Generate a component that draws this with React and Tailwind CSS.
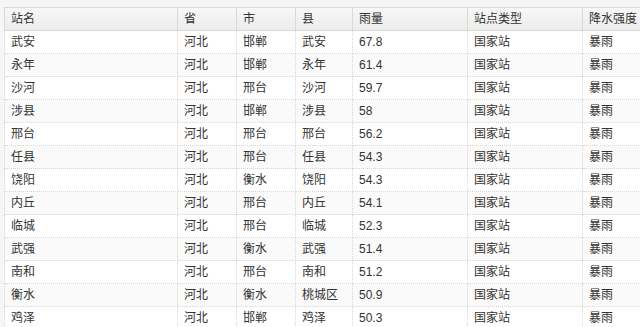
import React from 'react';

const colunas = [
    { titulo: '站名', largura: 'w-[173px]' },
    { titulo: '省', largura: 'w-[59px]' },
    { titulo: '市', largura: 'w-[59px]' },
    { titulo: '县', largura: 'w-[57px]' },
    { titulo: '雨量', largura: 'w-[115px]' },
    { titulo: '站点类型', largura: 'w-[115px]' },
    { titulo: '降水强度', largura: 'w-[80px]' },
];

const linhas = [
    ['武安', '河北', '邯郸', '武安', '67.8'],
    ['永年', '河北', '邯郸', '永年', '61.4'],
    ['沙河', '河北', '邢台', '沙河', '59.7'],
    ['涉县', '河北', '邯郸', '涉县', '58'],
    ['邢台', '河北', '邢台', '邢台', '56.2'],
    ['任县', '河北', '邢台', '任县', '54.3'],
    ['饶阳', '河北', '衡水', '饶阳', '54.3'],
    ['内丘', '河北', '邢台', '内丘', '54.1'],
    ['临城', '河北', '邢台', '临城', '52.3'],
    ['武强', '河北', '衡水', '武强', '51.4'],
    ['南和', '河北', '邢台', '南和', '51.2'],
    ['衡水', '河北', '衡水', '桃城区', '50.9'],
    ['鸡泽', '河北', '邯郸', '鸡泽', '50.3'],
];

const App = () => {
    return (
        <div className="w-[640px] h-[327px] overflow-hidden bg-[#f6f6f6] pt-[7px] pl-[4px] text-[#333] text-[12px] font-['Helvetica','Liberation_Sans','Noto_Sans_CJK_SC',sans-serif]">
            <table className="table-fixed border-collapse w-[658px]">
                <thead>
                    <tr className="h-[23px] bg-gradient-to-b from-[#f7f7f7] to-[#ececec]">
                        {colunas.map(col => (
                            <th
                                key={col.titulo}
                                className={`${col.largura} border border-[#d9d9d9] px-[6px] text-left font-normal leading-none`}
                            >
                                {col.titulo}
                            </th>
                        ))}
                    </tr>
                </thead>
                <tbody>
                    {linhas.map((linha, i) => (
                        <tr key={linha[0]} className={`h-[23px] ${i % 2 === 1 ? 'bg-[#fafafa]' : 'bg-white'}`}>
                            {[...linha, '国家站', '暴雨'].map((valor, j) => (
                                <td
                                    key={j}
                                    className="border border-dotted border-[#d6d6d6] px-[6px] leading-none whitespace-nowrap"
                                >
                                    {valor}
                                </td>
                            ))}
                        </tr>
                    ))}
                </tbody>
            </table>
        </div>
    );
};

export default App;
